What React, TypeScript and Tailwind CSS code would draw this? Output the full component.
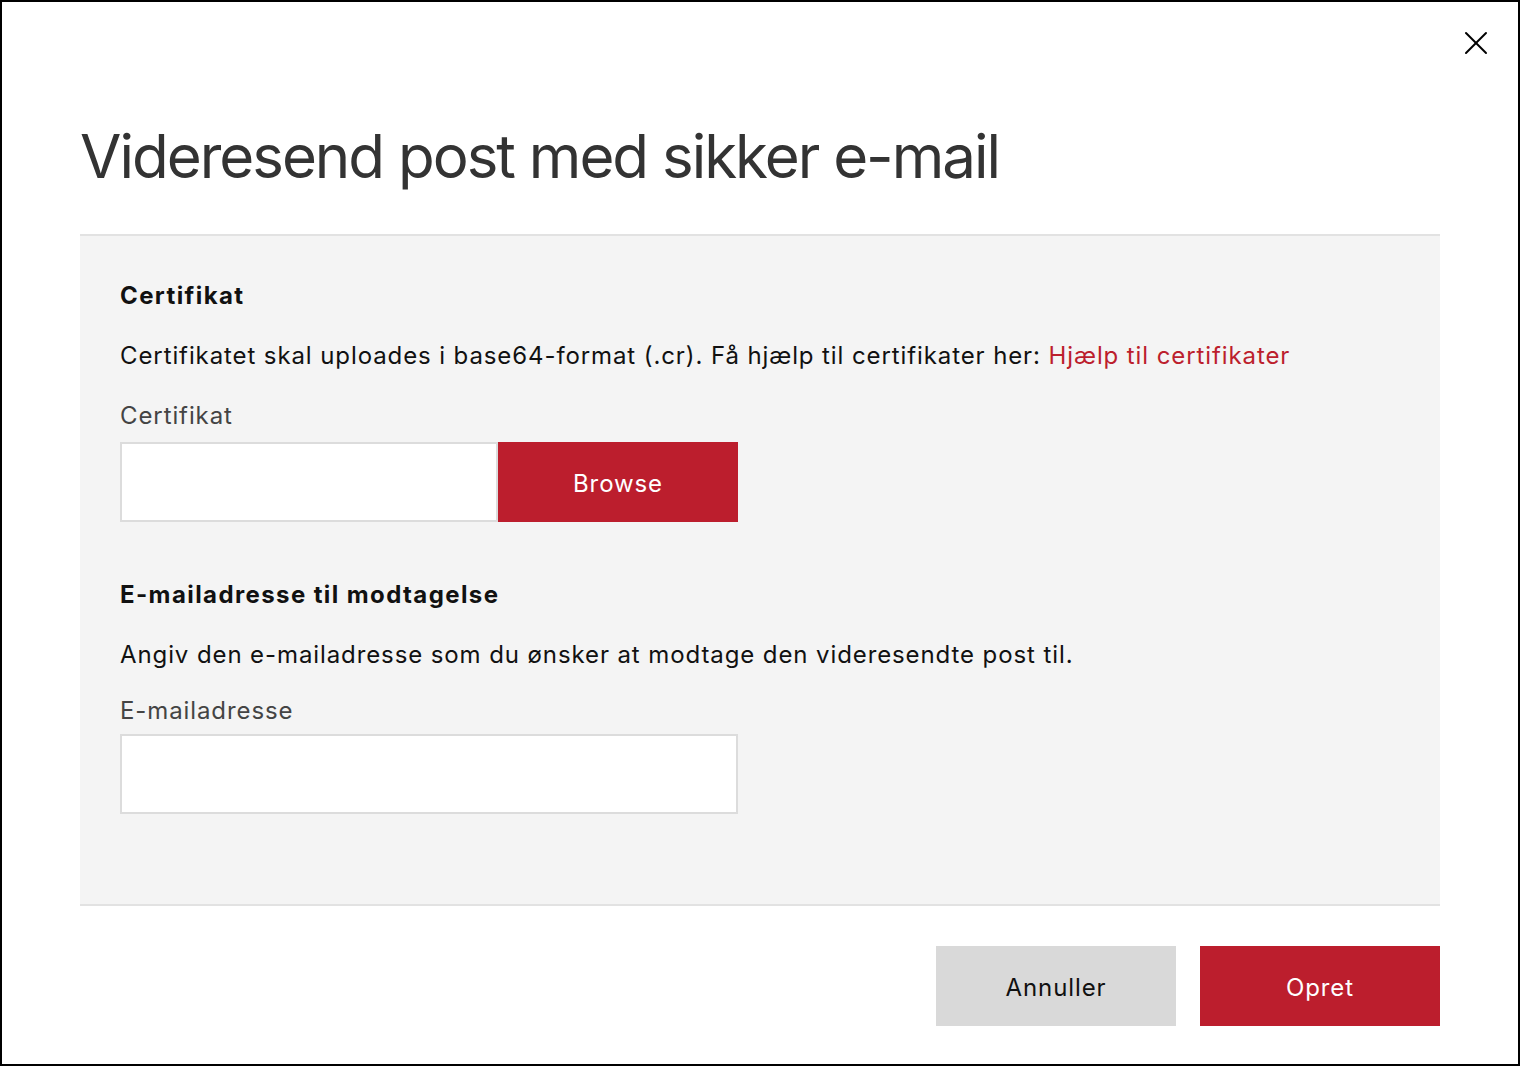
import { X } from "lucide-react";

export default function App() {
  return (
    <div className="relative w-[1520px] h-[1066px] border-2 border-black bg-white font-['Inter','Noto_Sans',sans-serif] text-[#111]">
      {/* Close */}
      <button className="absolute right-[22px] top-[21px] text-black">
        <X size={40} strokeWidth={1.2} />
      </button>

      <div className="flex flex-col px-[78px]">
        <h1 className="pt-[116px] text-[60px] leading-[76px] font-normal tracking-[-2px] text-[#333]">
          Videresend post med sikker e-mail
        </h1>

        {/* Form panel */}
        <div className="mt-[40px] flex flex-col border-y-2 border-[#e2e2e2] bg-[#f4f4f4] px-10 pt-[44px] pb-[90px] tracking-[0.9px]">
          <h2 className="text-[24px] leading-8 font-bold tracking-[1.4px] text-[#111]">Certifikat</h2>
          <p className="mt-7 text-[24px] leading-8 text-[#111]">
            Certifikatet skal uploades i base64-format (.cr). Få hjælp til certifikater her:{" "}
            <a href="#" className="text-[#bc1e2d]">Hjælp til certifikater</a>
          </p>
          <label className="mt-7 text-[24px] leading-8 text-[#444]">Certifikat</label>
          <div className="mt-[10px] flex h-20">
            <div className="w-[378px] border-2 border-[#dcdcdc] bg-white" />
            <button className="w-[240px] bg-[#bc1e2d] pt-1 text-[24px] tracking-[0.9px] text-white">Browse</button>
          </div>

          <h2 className="mt-[57px] text-[24px] leading-8 font-bold tracking-[1.4px] text-[#111]">
            E-mailadresse til modtagelse
          </h2>
          <p className="mt-7 text-[24px] leading-8 text-[#111]">
            Angiv den e-mailadresse som du ønsker at modtage den videresendte post til.
          </p>
          <label className="mt-6 text-[24px] leading-8 text-[#444]">E-mailadresse</label>
          <input
            type="email"
            className="mt-[7px] h-20 w-[618px] border-2 border-[#dcdcdc] bg-white px-4 text-[24px] outline-none"
          />
        </div>

        {/* Footer actions */}
        <div className="mt-10 flex justify-end gap-6">
          <button className="h-20 w-[240px] bg-[#d9d9d9] pt-1 text-[24px] tracking-[0.9px] text-[#111]">Annuller</button>
          <button className="h-20 w-[240px] bg-[#bc1e2d] pt-1 text-[24px] tracking-[0.9px] text-white">Opret</button>
        </div>
      </div>
    </div>
  );
}
